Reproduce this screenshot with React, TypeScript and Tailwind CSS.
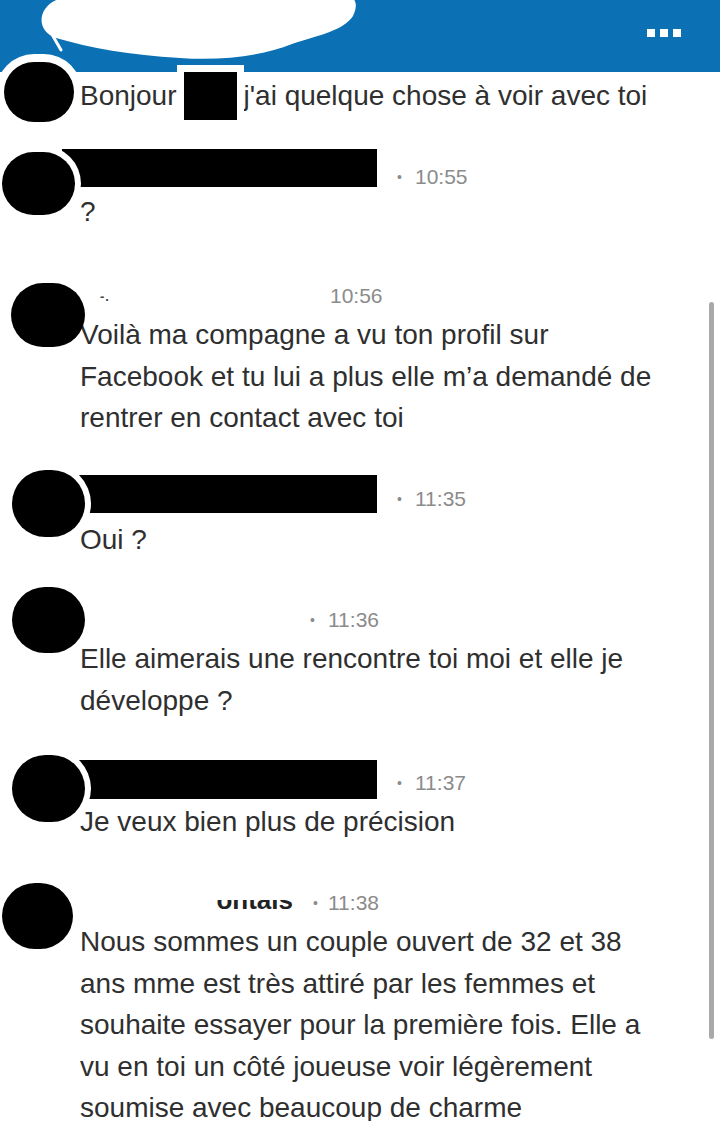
import type { ReactNode } from "react";

type Msg = {
  box: string;
  avatar: string;
  body: string;
  head: ReactNode;
  textTop: string;
  lines: string[];
};

function Time({ dot, value }: { dot?: string; value: string }) {
  return (
    <div className="flex items-center text-[21px] leading-[24px] text-[#8b8b8b]">
      {dot && <span className={`${dot} text-[14px]`}>•</span>}
      <span>{value}</span>
    </div>
  );
}

const messages: Msg[] = [
  {
    box: "h-[140px]",
    avatar: "ml-[2px] mt-[12px] w-[73px] h-[63px] shadow-[0_0_0_6px_#fff]",
    body: "ml-[5px] mt-[9px]",
    head: (
      <div className="flex items-end h-[38px]">
        <div className="relative ml-[-18px] w-[315px] h-[38px] bg-black" />
        <div className="ml-[20px] mb-[-2px]">
          <Time dot="w-[18px]" value="10:55" />
        </div>
      </div>
    ),
    textTop: "mt-[4px]",
    lines: ["?"],
  },
  {
    box: "h-[185px]",
    avatar: "ml-[11px] mt-[3px] w-[74px] h-[64px]",
    body: "ml-[-5px] mt-[4px]",
    head: (
      <div className="flex items-center h-[24px]">
        <div className="w-[250px] pl-[20px]">
          <span className="text-[13px] leading-none text-[#444] tracking-[1px] font-bold">-.</span>
        </div>
        <Time value="10:56" />
      </div>
    ),
    textTop: "mt-[6px]",
    lines: [
      "Voilà ma compagne a vu ton profil sur",
      "Facebook et tu lui a plus elle m’a demandé de",
      "rentrer en contact avec toi",
    ],
  },
  {
    box: "h-[120px]",
    avatar: "ml-[12px] mt-[5px] w-[73px] h-[67px] shadow-[0_0_0_6px_#fff]",
    body: "ml-[-5px] mt-[10px]",
    head: (
      <div className="flex items-end h-[38px]">
        <div className="relative ml-[-18px] w-[315px] h-[38px] bg-black" />
        <div className="ml-[20px] mb-[2px]">
          <Time dot="w-[18px]" value="11:35" />
        </div>
      </div>
    ),
    textTop: "mt-[6px]",
    lines: ["Oui ?"],
  },
  {
    box: "h-[167px]",
    avatar: "ml-[12px] mt-[2px] w-[73px] h-[66px]",
    body: "ml-[-5px] mt-[23px]",
    head: (
      <div className="flex items-center h-[24px]">
        <div className="w-[230px]" />
        <Time dot="w-[18px]" value="11:36" />
      </div>
    ),
    textTop: "mt-[6px]",
    lines: ["Elle aimerais une rencontre toi moi et elle je", "développe ?"],
  },
  {
    box: "h-[128px]",
    avatar: "ml-[12px] mt-[3px] w-[73px] h-[67px] shadow-[0_0_0_6px_#fff]",
    body: "ml-[-5px] mt-[8px]",
    head: (
      <div className="flex items-end h-[39px]">
        <div className="relative ml-[-18px] w-[315px] h-[39px] bg-black" />
        <div className="ml-[20px] mb-[4px]">
          <Time dot="w-[18px]" value="11:37" />
        </div>
      </div>
    ),
    textTop: "mt-[2px]",
    lines: ["Je veux bien plus de précision"],
  },
  {
    box: "h-[241px]",
    avatar: "ml-[2px] mt-[3px] w-[71px] h-[66px]",
    body: "ml-[7px] mt-[11px]",
    head: (
      <div className="flex items-center h-[24px]">
        <div className="w-[233px] flex justify-end pr-[20px]">
          <div className="h-[13px] mt-[6px] overflow-hidden flex items-end">
            <span className="text-[26px] leading-[26px] font-bold text-[#222]">ontais</span>
          </div>
        </div>
        <Time dot="w-[15px]" value="11:38" />
      </div>
    ),
    textTop: "mt-[6px]",
    lines: [
      "Nous sommes un couple ouvert de 32 et 38",
      "ans mme est très attiré par les femmes et",
      "souhaite essayer pour la première fois. Elle a",
      "vu en toi un côté joueuse voir légèrement",
      "soumise avec beaucoup de charme",
    ],
  },
];

export default function App() {
  return (
    <div className="relative w-[720px] h-[1121px] overflow-hidden bg-white font-['Liberation_Sans',Arial,sans-serif] text-[#2f2f2f]">
      {/* top bar */}
      <div className="relative h-[72px] bg-[#0b70b4] flex justify-end items-start pt-[29px] pr-[39px] gap-[5px]">
        <svg className="absolute left-0 top-0" width="720" height="72" viewBox="0 0 720 72">
          <path
            d="M62 -2 C38 4 34 30 56 38 C90 48 130 55 180 58 C222 61 262 56 292 44 C320 35 344 30 353 16 C358 6 356 -2 350 -2 Z"
            fill="#fff"
          />
          <path d="M50 31 L61 50" stroke="#fff" strokeWidth="3" strokeLinecap="round" />
        </svg>
        <div className="w-[8px] h-[8px] bg-white" />
        <div className="w-[8px] h-[8px] bg-white" />
        <div className="w-[8px] h-[8px] bg-white" />
      </div>

      {/* first message, partly under the bar */}
      <div className="flex items-start h-[68px]">
        <div className="relative z-10 shrink-0 ml-[4px] mt-[-10px] w-[70px] h-[60px] rounded-full bg-black shadow-[0_0_0_8px_#fff]" />
        <div className="ml-[6px] flex items-center h-[48px] text-[28px] whitespace-nowrap">
          <span>Bonjour</span>
          <div className="relative ml-[7px] mr-[7px] w-[53px] h-[48px] bg-black shadow-[0_0_0_7px_#fff]" />
          <span>j'ai quelque chose à voir avec toi</span>
        </div>
      </div>

      {messages.map((m, i) => (
        <div key={i} className={`flex items-start ${m.box}`}>
          <div className={`relative z-10 shrink-0 rounded-full bg-black ${m.avatar}`} />
          <div className={`flex-1 min-w-0 ${m.body}`}>
            {m.head}
            <div className={`${m.textTop} text-[28px] leading-[41.5px] whitespace-nowrap`}>
              {m.lines.map((l, j) => (
                <div key={j}>{l}</div>
              ))}
            </div>
          </div>
        </div>
      ))}

      {/* scrollbar */}
      <div className="absolute left-[709px] top-[302px] w-[5px] h-[737px] rounded-full bg-[#a9a9a9]" />
    </div>
  );
}
